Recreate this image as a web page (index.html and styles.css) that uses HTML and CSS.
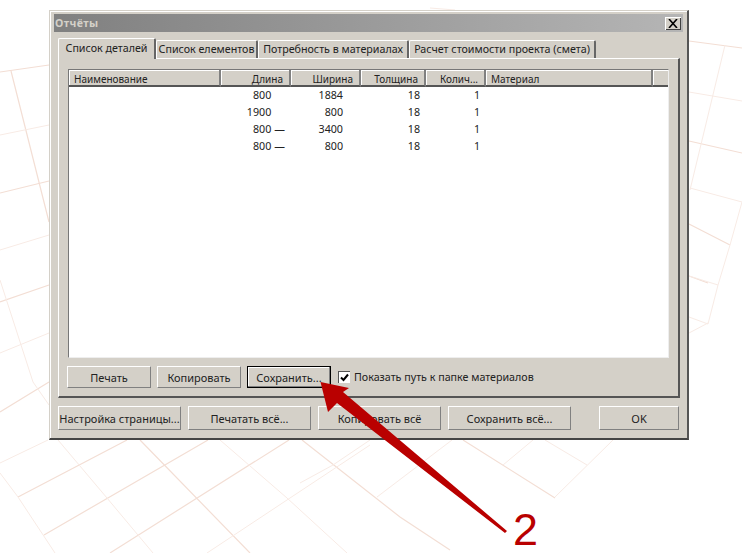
FILE: index.html
```html
<!DOCTYPE html>
<html lang="ru">
<head>
  <meta charset="UTF-8" />
  <title>Отчёты</title>
  <link rel="stylesheet" href="styles.css">
</head>
<body>
  <div class="desktop">
    <!-- сетка на фоне -->
    <svg class="grid" width="742" height="553" viewBox="0 0 742 553">
      <g class="grid-strong">
        <path d="M0 72L49 65M0 193L49 181M0 302L49 285M0 412L49 382M689 41L742 48M689 141L742 153M689 224L730 245M689 276L708 283" />
        <path d="M18 497L127 440M110 553L289 440M44 535L208 440" />
        <path d="M140 440L250 553M302 440L400 517L450 550M463 440L555 498M11 71L49 222" />
      </g>
      <g class="grid-light">
        <path d="M0 135L49 125M0 250L49 235M0 353L49 333M0 463L48 440M689 92L742 101M690 188L742 202M689 276L718 285M689 317L708 324M689 333L708 323" />
        <path d="M725 45L690 190M742 202L730 245L718 285L708 324M0 280L33 382L49 405" />
        <path d="M0 473L18 497L55 553M58 440L107 498L153 553M220 440L287 498L347 553M207 553L370 445M300 483L333 465L370 440M377 497L452 440M503 465L533 440M555 497L613 440M545 440L587 465M430 8L455 10" />
      </g>
    </svg>

    <div class="window">
      <div class="titlebar">
        <span class="title">Отчёты</span>
        <span class="close">
          <svg width="10" height="9" viewBox="0 0 10 9"><path d="M1 0L9 9M9 0L1 9" /></svg>
        </span>
      </div>

      <div class="tabs">
        <div class="tab active">Список деталей</div>
        <div class="tab t2">Список елементов</div>
        <div class="tab t3">Потребность в материалах</div>
        <div class="tab t4">Расчет стоимости проекта (смета)</div>
      </div>

      <div class="panel">
        <div class="list">
          <div class="row head">
            <div class="cell">Наименование</div>
            <div class="cell num">Длина</div>
            <div class="cell num">Ширина</div>
            <div class="cell num">Толщина</div>
            <div class="cell num">Колич...</div>
            <div class="cell">Материал</div>
            <div class="cell"></div>
          </div>
          <div class="row">
            <div class="cell"></div>
            <div class="cell num">800<span class="dash off">—</span></div>
            <div class="cell num w">1884</div>
            <div class="cell num">18</div>
            <div class="cell num">1</div>
            <div class="cell"></div>
          </div>
          <div class="row">
            <div class="cell"></div>
            <div class="cell num">1900<span class="dash off">—</span></div>
            <div class="cell num w">800</div>
            <div class="cell num">18</div>
            <div class="cell num">1</div>
            <div class="cell"></div>
          </div>
          <div class="row">
            <div class="cell"></div>
            <div class="cell num">800<span class="dash">—</span></div>
            <div class="cell num w">3400</div>
            <div class="cell num">18</div>
            <div class="cell num">1</div>
            <div class="cell"></div>
          </div>
          <div class="row">
            <div class="cell"></div>
            <div class="cell num">800<span class="dash">—</span></div>
            <div class="cell num w">800</div>
            <div class="cell num">18</div>
            <div class="cell num">1</div>
            <div class="cell"></div>
          </div>
        </div>

        <div class="panel-actions">
          <button class="btn">Печать</button>
          <button class="btn">Копировать</button>
          <button class="btn focused">Сохранить...</button>
          <label class="check">
            <span class="box">
              <svg width="9" height="9" viewBox="0 0 9 9"><path d="M1 4.5L3.5 7L8 1.5" /></svg>
            </span>
            Показать путь к папке материалов
          </label>
        </div>
      </div>

      <div class="footer">
        <button class="btn wide">Настройка страницы...</button>
        <button class="btn wide">Печатать всё...</button>
        <button class="btn wide">Копировать всё</button>
        <button class="btn wide">Сохранить всё...</button>
        <button class="btn ok">OK</button>
      </div>
    </div>

    <!-- стрелка и номер шага -->
    <svg class="arrow" width="742" height="553" viewBox="0 0 742 553">
      <polygon points="320.5,382 349,388 343,392 507,531 505,533 337,403 328,412" />
    </svg>
    <div class="step">2</div>
  </div>
</body>
</html>
```

FILE: styles.css
```css
html, body {
  margin: 0;
  padding: 0;
  background: #fff;
}
.desktop {
  position: relative;
  width: 742px;
  height: 553px;
  overflow: hidden;
  font-family: "Noto Sans", "Liberation Sans", sans-serif;
  font-size: 10.7px;
  color: #222;
}
.grid {
  position: absolute;
  left: 0;
  top: 0;
}
.grid path {
  fill: none;
}
.grid-strong path {
  stroke: #f3ded4;
  stroke-width: 1.2;
}
.grid-light path {
  stroke: #f8ebe5;
  stroke-width: 1;
}

/* окно */
.window {
  position: absolute;
  left: 49px;
  top: 10px;
  width: 640px;
  height: 430px;
  box-sizing: border-box;
  padding: 4px 4px 0;
  background: #d4d0c8;
  border-top: 1px solid #d4d0c8;
  border-left: 1px solid #d4d0c8;
  border-right: 2px solid #555;
  border-bottom: 2px solid #444;
  box-shadow: inset 1px 1px 0 #fff;
}
.titlebar {
  display: flex;
  align-items: center;
  justify-content: space-between;
  height: 18px;
  margin: -1px 0 0;
  padding: 0 2px 0 1px;
  background: linear-gradient(to right, #808080, #b5b5b5);
}
.title {
  font-weight: bold;
  letter-spacing: 0.4px;
  color: #d4d0c8;
}
.close {
  display: flex;
  align-items: center;
  justify-content: center;
  width: 16px;
  height: 13px;
  background: #d4d0c8;
  box-shadow: inset 1px 1px 0 #fff, inset -1px -1px 0 #404040;
}
.close path {
  fill: none;
  stroke: #000;
  stroke-width: 1.6;
}

/* вкладки */
.tabs {
  display: flex;
  align-items: flex-end;
  height: 21px;
  margin: 6px 0 0 4px;
}
.tab {
  box-sizing: border-box;
  height: 18px;
  line-height: 17px;
  text-align: center;
  border-top: 1px solid #fff;
  border-left: 1px solid #fff;
  border-right: 2px solid #666;
  border-radius: 2px 2px 0 0;
  margin-bottom: 1px;
}
.tab.active {
  width: 98px;
  height: 21px;
  line-height: 18px;
  margin-bottom: 0;
  background: #d4d0c8;
  position: relative;
  z-index: 1;
}
.t2 { width: 102px; }
.t3 { width: 151px; }
.t4 { width: 187px; }

.panel {
  box-sizing: border-box;
  width: 622px;
  height: 340px;
  margin: -1px 0 0 4px;
  padding: 10px 9px 0;
  border-top: 1px solid #fff;
  border-left: 1px solid #fff;
  border-right: 2px solid #555;
  border-bottom: 2px solid #555;
}

/* список */
.list {
  box-sizing: border-box;
  height: 289px;
  background: #fff;
  border-top: 1px solid #777;
  border-left: 1px solid #777;
  border-right: 1px solid #eee;
  border-bottom: 1px solid #eee;
}
.row {
  display: grid;
  grid-template-columns: 152px 70px 70px 65px 60px 167px 1fr;
  height: 17px;
  line-height: 17px;
}
.row.head {
  line-height: 16px;
  font-size: 10px;
  background: #d4d0c8;
}
.cell {
  box-sizing: border-box;
  padding: 0 6px 0 5px;
  white-space: nowrap;
  overflow: hidden;
}
.head .cell {
  padding-top: 1px;
  border-right: 2px solid #808080;
  border-bottom: 2px solid #555;
  box-shadow: inset 1px 1px 0 #fff;
}
.head .cell:last-child {
  border-right: 0;
}
.num {
  text-align: right;
}
.w {
  padding-right: 18px;
}
.dash {
  margin-left: 3px;
}
.dash.off {
  visibility: hidden;
}

.panel-actions {
  display: flex;
  align-items: center;
  gap: 6px;
  margin: 8px 0 0 -1px;
}
.btn {
  box-sizing: border-box;
  width: 84px;
  height: 22px;
  padding: 0;
  font: inherit;
  font-size: 11px;
  color: inherit;
  background: #d4d0c8;
  border-top: 1px solid #fff;
  border-left: 1px solid #fff;
  border-right: 1px solid #808080;
  border-bottom: 1px solid #808080;
}
.btn.focused {
  border: 1px solid #000;
  box-shadow: inset -1px -1px 0 #808080, inset 1px 1px 0 #fff;
}
.check {
  display: flex;
  align-items: center;
  gap: 4px;
  margin-left: 1px;
}
.box {
  display: flex;
  align-items: center;
  justify-content: center;
  width: 11px;
  height: 11px;
  background: #fff;
  border-top: 1px solid #555;
  border-left: 1px solid #555;
}
.box path {
  fill: none;
  stroke: #000;
  stroke-width: 2;
}

.footer {
  display: flex;
  gap: 7px;
  margin: 8px 0 0 4px;
}
.footer .btn {
  height: 24px;
}
.btn.wide {
  width: 123px;
}
.btn.ok {
  width: 80px;
  margin-left: 21px;
}

/* стрелка */
.arrow {
  position: absolute;
  left: 0;
  top: 0;
}
.arrow polygon {
  fill: #b90000;
}
.step {
  position: absolute;
  left: 513px;
  top: 508px;
  font-family: "Liberation Sans", sans-serif;
  font-size: 45px;
  line-height: 44px;
  color: #b90000;
}
```
